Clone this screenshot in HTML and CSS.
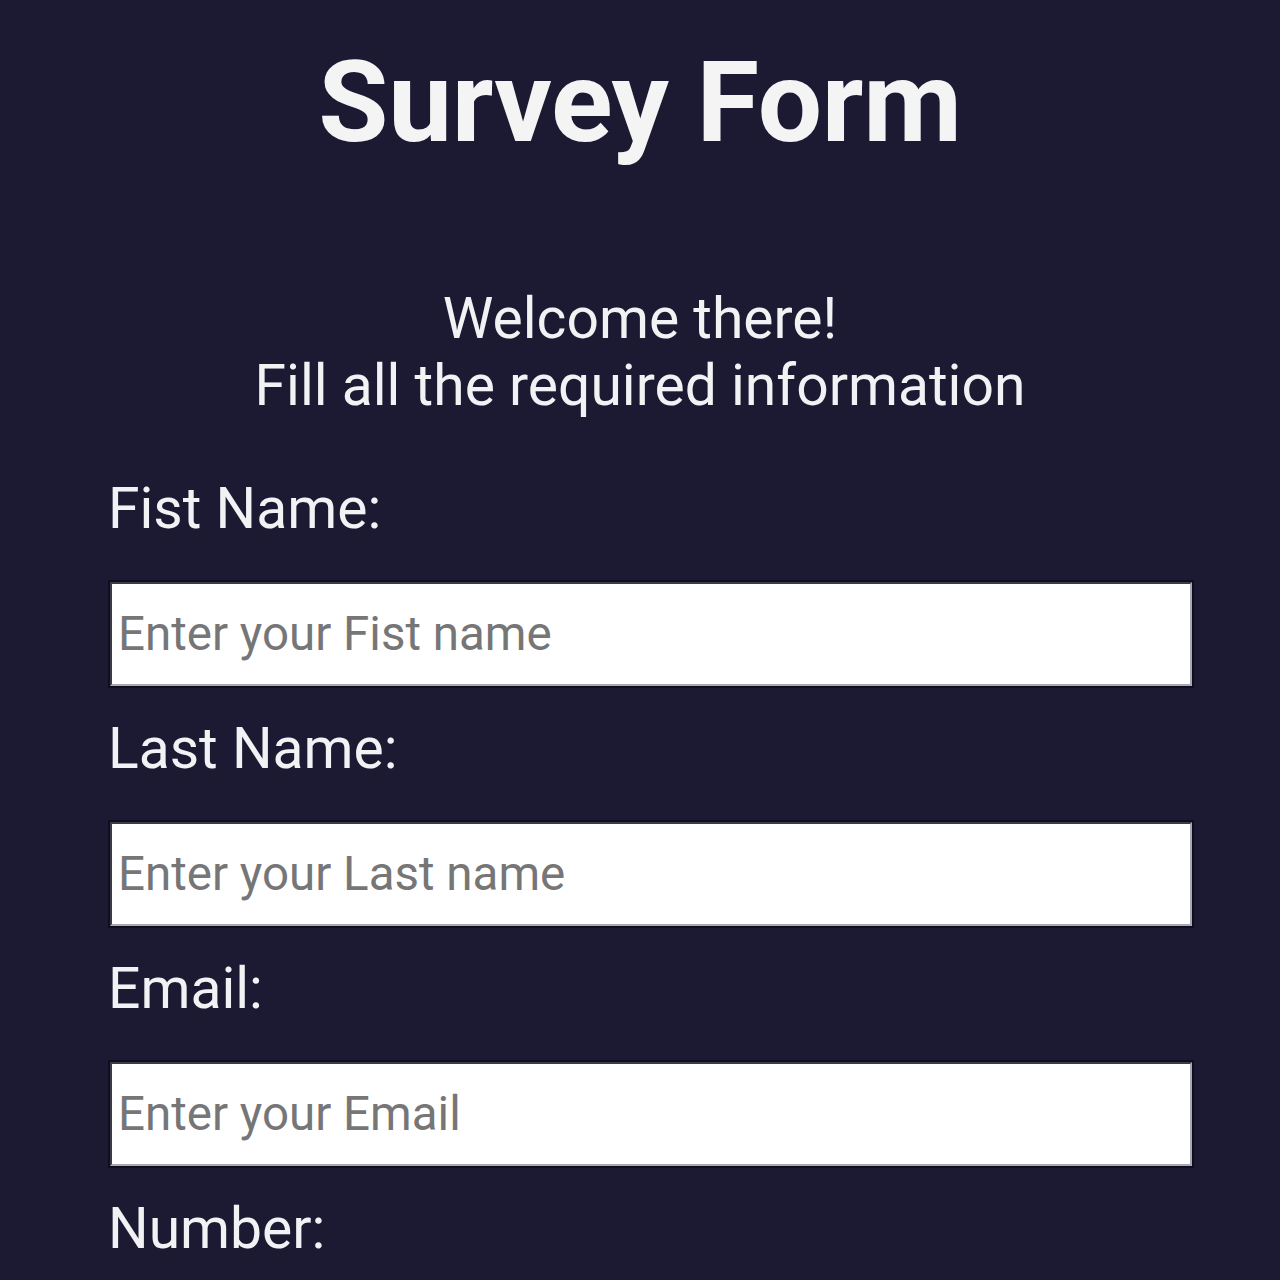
FILE: index.html
```html
<!DOCTYPE html>
<html lang="en">
<head>
<meta charset="utf-8">
<title>Survey Form</title>
<link rel="stylesheet" href="styles.css">
</head>
<body>
  <main class="page">
    <h1 class="title">Survey Form</h1>
    <p class="intro">Welcome there!<br>Fill all the required information</p>
    <form class="form">
      <label class="label" for="fname">Fist Name:</label>
      <input class="field" id="fname" type="text" placeholder="Enter your Fist name">
      <label class="label" for="lname">Last Name:</label>
      <input class="field" id="lname" type="text" placeholder="Enter your Last name">
      <label class="label" for="email">Email:</label>
      <input class="field" id="email" type="email" placeholder="Enter your Email">
      <label class="label" for="num">Number:</label>
      <input class="field" id="num" type="tel" placeholder="Enter your Number">
    </form>
  </main>
</body>
</html>
```
FILE: styles.css
```css
html, body {
  margin: 0;
  padding: 0;
  background: #1b1a32;
}
body {
  font-family: Roboto, "Noto Sans", sans-serif;
  color: #f2f2f4;
  height: 1280px;
  overflow: hidden;
}
.page {
  padding: 0;
}
.title {
  margin: 0;
  padding-top: 35px;
  text-align: center;
  font-size: 114px;
  font-weight: 700;
  line-height: 134px;
  letter-spacing: -0.3px;
  color: #f4f4f5;
}
.intro {
  margin: 116px 0 0;
  text-align: center;
  font-size: 57px;
  line-height: 67px;
}
.form {
  display: flex;
  flex-direction: column;
  align-items: flex-start;
  margin-top: 60px;
  padding-left: 108px;
}
.label {
  font-size: 57px;
  line-height: 60px;
  display: block;
}
.field {
  margin: 43px 0 33px 2px;
  width: 1082px;
  height: 104px;
  box-sizing: border-box;
  border: 2px solid #a9a9b4;
  border-top-color: #3a3a48;
  border-left-color: #3a3a48;
  box-shadow: 0 0 0 2px #0e0e1e;
  background: #ffffff;
  font-family: Roboto, sans-serif;
  font-size: 47.5px;
  padding: 0 6px;
  color: #333;
}
.field::placeholder {
  color: #767676;
}
```
